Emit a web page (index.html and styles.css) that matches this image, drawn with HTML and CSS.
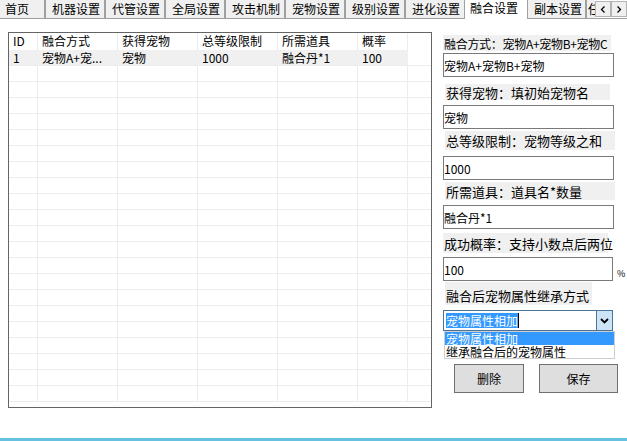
FILE: index.html
```html
<!DOCTYPE html>
<html lang="zh-CN">
<head>
<meta charset="utf-8">
<title>融合设置</title>
<link rel="stylesheet" href="styles.css">
</head>
<body>
<div class="window">
  <div class="tabbar">
    <div class="tab tab-first">首页</div>
    <div class="tab">机器设置</div>
    <div class="tab">代管设置</div>
    <div class="tab">全局设置</div>
    <div class="tab">攻击机制</div>
    <div class="tab">宠物设置</div>
    <div class="tab">级别设置</div>
    <div class="tab">进化设置</div>
    <div class="tab tab-active">融合设置</div>
    <div class="tab tab-next">副本设置</div>
    <div class="tab tab-partial">任务设置</div>
    <div class="tab-scroll">
      <div class="scroll-btn"><svg width="6" height="7" viewBox="0 0 6 7"><path d="M4.5 0.5 L1.5 3.5 L4.5 6.5" fill="none" stroke="#000" stroke-width="1.3"/></svg></div>
      <div class="scroll-btn"><svg width="6" height="7" viewBox="0 0 6 7"><path d="M1.5 0.5 L4.5 3.5 L1.5 6.5" fill="none" stroke="#000" stroke-width="1.3"/></svg></div>
    </div>
  </div>

  <div class="content">
    <div class="grid">
      <div class="row row-head">
        <div class="cell">ID</div><div class="cell">融合方式</div><div class="cell">获得宠物</div><div class="cell">总等级限制</div><div class="cell">所需道具</div><div class="cell">概率</div><div class="cell"></div>
      </div>
      <div class="row row-selected">
        <div class="cell">1</div><div class="cell">宠物A+宠...</div><div class="cell">宠物</div><div class="cell">1000</div><div class="cell">融合丹*1</div><div class="cell">100</div><div class="cell cell-blank"></div>
      </div>
      <div class="row"><div class="cell"></div><div class="cell"></div><div class="cell"></div><div class="cell"></div><div class="cell"></div><div class="cell"></div><div class="cell"></div></div>
      <div class="row"><div class="cell"></div><div class="cell"></div><div class="cell"></div><div class="cell"></div><div class="cell"></div><div class="cell"></div><div class="cell"></div></div>
      <div class="row"><div class="cell"></div><div class="cell"></div><div class="cell"></div><div class="cell"></div><div class="cell"></div><div class="cell"></div><div class="cell"></div></div>
      <div class="row"><div class="cell"></div><div class="cell"></div><div class="cell"></div><div class="cell"></div><div class="cell"></div><div class="cell"></div><div class="cell"></div></div>
      <div class="row"><div class="cell"></div><div class="cell"></div><div class="cell"></div><div class="cell"></div><div class="cell"></div><div class="cell"></div><div class="cell"></div></div>
      <div class="row"><div class="cell"></div><div class="cell"></div><div class="cell"></div><div class="cell"></div><div class="cell"></div><div class="cell"></div><div class="cell"></div></div>
      <div class="row"><div class="cell"></div><div class="cell"></div><div class="cell"></div><div class="cell"></div><div class="cell"></div><div class="cell"></div><div class="cell"></div></div>
      <div class="row"><div class="cell"></div><div class="cell"></div><div class="cell"></div><div class="cell"></div><div class="cell"></div><div class="cell"></div><div class="cell"></div></div>
      <div class="row"><div class="cell"></div><div class="cell"></div><div class="cell"></div><div class="cell"></div><div class="cell"></div><div class="cell"></div><div class="cell"></div></div>
      <div class="row"><div class="cell"></div><div class="cell"></div><div class="cell"></div><div class="cell"></div><div class="cell"></div><div class="cell"></div><div class="cell"></div></div>
      <div class="row"><div class="cell"></div><div class="cell"></div><div class="cell"></div><div class="cell"></div><div class="cell"></div><div class="cell"></div><div class="cell"></div></div>
      <div class="row"><div class="cell"></div><div class="cell"></div><div class="cell"></div><div class="cell"></div><div class="cell"></div><div class="cell"></div><div class="cell"></div></div>
      <div class="row"><div class="cell"></div><div class="cell"></div><div class="cell"></div><div class="cell"></div><div class="cell"></div><div class="cell"></div><div class="cell"></div></div>
      <div class="row"><div class="cell"></div><div class="cell"></div><div class="cell"></div><div class="cell"></div><div class="cell"></div><div class="cell"></div><div class="cell"></div></div>
      <div class="row"><div class="cell"></div><div class="cell"></div><div class="cell"></div><div class="cell"></div><div class="cell"></div><div class="cell"></div><div class="cell"></div></div>
      <div class="row"><div class="cell"></div><div class="cell"></div><div class="cell"></div><div class="cell"></div><div class="cell"></div><div class="cell"></div><div class="cell"></div></div>
      <div class="row"><div class="cell"></div><div class="cell"></div><div class="cell"></div><div class="cell"></div><div class="cell"></div><div class="cell"></div><div class="cell"></div></div>
      <div class="row"><div class="cell"></div><div class="cell"></div><div class="cell"></div><div class="cell"></div><div class="cell"></div><div class="cell"></div><div class="cell"></div></div>
      <div class="row"><div class="cell"></div><div class="cell"></div><div class="cell"></div><div class="cell"></div><div class="cell"></div><div class="cell"></div><div class="cell"></div></div>
      <div class="row"><div class="cell"></div><div class="cell"></div><div class="cell"></div><div class="cell"></div><div class="cell"></div><div class="cell"></div><div class="cell"></div></div>
      <div class="row"><div class="cell"></div><div class="cell"></div><div class="cell"></div><div class="cell"></div><div class="cell"></div><div class="cell"></div><div class="cell"></div></div>
    </div>

    <div class="form">
      <div class="lbl lbl-1">融合方式：宠物A+宠物B+宠物C</div>
      <div class="field field-1">宠物A+宠物B+宠物</div>
      <div class="lbl lbl-2">获得宠物：填初始宠物名</div>
      <div class="field field-2">宠物</div>
      <div class="lbl lbl-3">总等级限制：宠物等级之和</div>
      <div class="field field-3">1000</div>
      <div class="lbl lbl-4">所需道具：道具名*数量</div>
      <div class="field field-4">融合丹*1</div>
      <div class="lbl lbl-5">成功概率：支持小数点后两位</div>
      <div class="field-row">
        <div class="field field-5">100</div>
        <span class="unit">%</span>
      </div>
      <div class="lbl lbl-6">融合后宠物属性继承方式</div>
      <div class="combo">
        <div class="combo-value"><span class="combo-sel">宠物属性相加</span><span class="caret"></span></div>
        <div class="combo-btn"><svg width="9" height="6" viewBox="0 0 9 6"><path d="M1 1 L4.5 4.5 L8 1" fill="none" stroke="#000" stroke-width="1.8"/></svg></div>
        <div class="droplist">
          <div class="drop-item drop-item-active">宠物属性相加</div>
          <div class="drop-item">继承融合后的宠物属性</div>
        </div>
      </div>
      <div class="buttons">
        <div class="btn btn-del">删除</div>
        <div class="btn btn-save">保存</div>
      </div>
    </div>
  </div>

  <div class="statusline"></div>
</div>
</body>
</html>
```

FILE: styles.css
```css
* { box-sizing: border-box; }

html, body {
  margin: 0;
  padding: 0;
  background: #ffffff;
}

body {
  font-family: "Noto Sans CJK SC", "Noto Sans", sans-serif;
  font-size: 12px;
  color: #000;
}

.window {
  width: 627px;
  height: 441px;
  display: flex;
  flex-direction: column;
  overflow: hidden;
  background: #fff;
}

/* ---------- tabs ---------- */
.tabbar {
  display: flex;
  height: 19px;
  flex: none;
}

.tab {
  width: 60px;
  height: 19px;
  padding-left: 6px;
  background: #f0f0f0;
  border-left: 1px solid #a0a0a0;
  border-right: 1px solid #a0a0a0;
  border-bottom: 1px solid #a0a0a0;
  line-height: 18px;
  white-space: nowrap;
  overflow: hidden;
  flex: none;
}

.tab-first {
  width: 45px;
  padding-left: 5px;
  border-left: none;
}

.tab-active {
  width: 62px;
  background: #fff;
  border-left-color: #fff;
  border-right-color: #fff;
  border-bottom-color: #fff;
  line-height: 15px;
  padding-left: 4px;
}

.tab-next {
  width: 59px;
}

.tab-partial {
  width: 9px;
  padding-left: 1px;
  border-right: none;
}

.tab-scroll {
  display: flex;
  flex: none;
  width: 32px;
  height: 19px;
  border-bottom: 1px solid #a0a0a0;
  padding-top: 1px;
}

.scroll-btn {
  width: 16px;
  height: 16px;
  border: 1px solid #b4b4b4;
  background: #f0f0f0;
  display: flex;
  align-items: center;
  justify-content: center;
}

/* ---------- content ---------- */
.content {
  flex: 1;
  display: flex;
  padding: 13px 0 0 8px;
}

.grid {
  width: 424px;
  height: 376px;
  border: 1px solid #646464;
  overflow: hidden;
  flex: none;
}

.row {
  display: grid;
  grid-template-columns: 29px 80px 80px 80px 80px 50px 1fr;
  height: 16px;
  border-bottom: 1px solid #ececec;
}

.row-head {
  height: 17px;
  border-bottom: none;
}

.cell {
  border-right: 1px solid #ececec;
  padding-left: 4px;
  line-height: 15px;
  white-space: nowrap;
  overflow: hidden;
}

.cell:last-child {
  border-right: none;
}

.row-head .cell {
  line-height: 16px;
}

.row-selected .cell {
  background: #f0f0f0;
  border-right-color: #f0f0f0;
}

.row-selected .cell-blank {
  background: #fff;
}

/* ---------- form ---------- */
.form {
  margin-left: 11px;
  width: 182px;
  display: flex;
  flex-direction: column;
  align-items: flex-start;
}

.lbl {
  background: #f0f0f0;
  font-size: 13px;
  padding-left: 1px;
  display: flex;
  align-items: center;
  white-space: nowrap;
}

.lbl-1 { margin-top: 3px; height: 16px; width: 168px; font-size: 12px; letter-spacing: -0.3px; }
.lbl-2 { margin-top: 7px; height: 16px; width: 165px; margin-left: 2px; }
.lbl-3 { margin-top: 2px; height: 19px; width: 170px; margin-left: 2px; }
.lbl-4 { margin-top: 2px; height: 18px; width: 170px; margin-left: 2px; }
.lbl-5 { margin-top: 4px; height: 20px; width: 165px; }
.lbl-6 { margin-top: 1px; height: 23px; width: 147px; margin-left: 2px; padding-top: 3px; }

.field {
  width: 171px;
  height: 24px;
  border: 1px solid #7a7a7a;
  background: #fff;
  padding-left: 0;
  display: flex;
  align-items: center;
  white-space: nowrap;
}

.field-1 { margin-top: 2px; }
.field-2 { margin-top: 5px; }
.field-3 { margin-top: 6px; }
.field-4 { margin-top: 5px; }

.field-row {
  margin-top: 4px;
  display: flex;
  align-items: flex-end;
}

.field-5 { width: 170px; }

.unit {
  font-size: 9px;
  line-height: 9px;
  margin-left: 4px;
  margin-bottom: 3px;
}

/* ---------- combo ---------- */
.combo {
  position: relative;
  margin-top: 5px;
  width: 170px;
  height: 21px;
  border: 1px solid #4a7396;
  display: flex;
  background: #fff;
}

.combo-value {
  flex: 1;
  display: flex;
  align-items: center;
  padding-left: 2px;
}

.combo-sel {
  background: #3399ff;
  color: #fff;
  line-height: 15px;
  height: 15px;
}

.caret {
  width: 1px;
  height: 15px;
  background: #000;
}

.combo-btn {
  width: 16px;
  background: #cde4f7;
  border-left: 1px solid #4a7396;
  display: flex;
  align-items: center;
  justify-content: center;
}

.droplist {
  position: absolute;
  top: 20px;
  left: 0;
  width: 171px;
  height: 28px;
  border: 1px solid #cfcfcf;
  background: #fff;
  padding: 0;
}

.drop-item {
  height: 13px;
  line-height: 13px;
  padding-left: 1px;
  white-space: nowrap;
}

.drop-item-active {
  background: #3399ff;
  color: #fff;
}

/* ---------- buttons ---------- */
.buttons {
  margin-top: 33px;
  margin-left: 11px;
  display: flex;
  gap: 15px;
}

.btn {
  height: 29px;
  background: #dedede;
  border: 1px solid #707070;
  display: flex;
  align-items: center;
  justify-content: center;
}

.btn-del { width: 70px; }
.btn-save { width: 79px; }

/* ---------- bottom line ---------- */
.statusline {
  flex: none;
  height: 3px;
  background: #66c1e0;
}
```
